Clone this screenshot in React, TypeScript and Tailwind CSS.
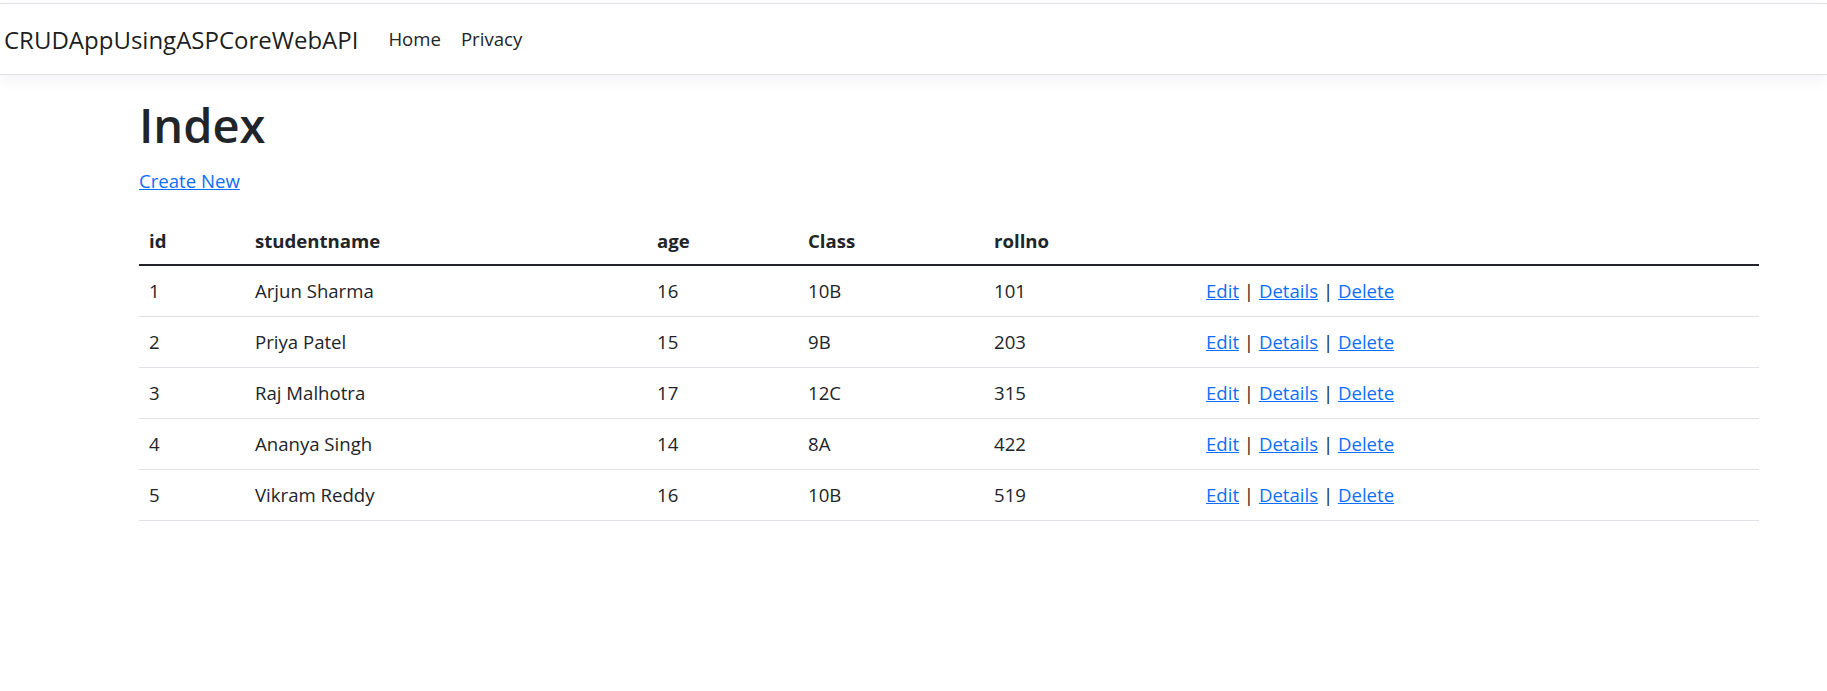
import React from "react";

const students = [
  { id: 1, name: "Arjun Sharma", age: 16, cls: "10B", roll: 101 },
  { id: 2, name: "Priya Patel", age: 15, cls: "9B", roll: 203 },
  { id: 3, name: "Raj Malhotra", age: 17, cls: "12C", roll: 315 },
  { id: 4, name: "Ananya Singh", age: 14, cls: "8A", roll: 422 },
  { id: 5, name: "Vikram Reddy", age: 16, cls: "10B", roll: 519 },
];

export default function App() {
  return (
    <div className="min-h-screen bg-white text-[#212529] font-['Open_Sans',sans-serif]">
      <header className="mt-[3px] border-t border-b border-[#dee2e6] bg-white shadow-[0_5px_15px_rgba(0,0,0,0.05)]">
        <nav className="h-[70px] flex items-center pl-[4px]">
          <a href="#" className="mr-[20px] text-[24px] leading-[37px] text-black/90">
            CRUDAppUsingASPCoreWebAPI
          </a>
          <a href="#" className="px-[10px] text-[18.6px] leading-[30px] text-[#212529]">
            Home
          </a>
          <a href="#" className="px-[10px] text-[18.6px] leading-[30px] text-[#212529]">
            Privacy
          </a>
        </nav>
      </header>

      <main className="pl-[139px] pt-[19px]">
        <h1 className="text-[47px] leading-[62px] font-semibold mb-[10px]">Index</h1>
        <p className="mb-[20px] text-[18.6px] leading-[30px]">
          <a href="#" className="text-[#0d6efd] underline">
            Create New
          </a>
        </p>

        <table className="w-[1620px] table-fixed border-collapse text-[18.6px] leading-[30px]">
          <thead>
            <tr className="text-left">
              <th className="w-[106px] px-[10px] pt-[10px] pb-[8px] font-bold border-b-2 border-[#212529]">id</th>
              <th className="w-[402px] px-[10px] pt-[10px] pb-[8px] font-bold border-b-2 border-[#212529]">studentname</th>
              <th className="w-[151px] px-[10px] pt-[10px] pb-[8px] font-bold border-b-2 border-[#212529]">age</th>
              <th className="w-[186px] px-[10px] pt-[10px] pb-[8px] font-bold border-b-2 border-[#212529]">Class</th>
              <th className="w-[212px] px-[10px] pt-[10px] pb-[8px] font-bold border-b-2 border-[#212529]">rollno</th>
              <th className="w-[563px] px-[10px] pt-[10px] pb-[8px] border-b-2 border-[#212529]"></th>
            </tr>
          </thead>
          <tbody>
            {students.map((s) => (
              <tr key={s.id}>
                <td className="p-[10px] border-b border-[#dee2e6]">{s.id}</td>
                <td className="p-[10px] border-b border-[#dee2e6]">{s.name}</td>
                <td className="p-[10px] border-b border-[#dee2e6]">{s.age}</td>
                <td className="p-[10px] border-b border-[#dee2e6]">{s.cls}</td>
                <td className="p-[10px] border-b border-[#dee2e6]">{s.roll}</td>
                <td className="p-[10px] border-b border-[#dee2e6]">
                  <a href="#" className="text-[#0d6efd] underline">Edit</a> |{" "}
                  <a href="#" className="text-[#0d6efd] underline">Details</a> |{" "}
                  <a href="#" className="text-[#0d6efd] underline">Delete</a>
                </td>
              </tr>
            ))}
          </tbody>
        </table>
      </main>
    </div>
  );
}
